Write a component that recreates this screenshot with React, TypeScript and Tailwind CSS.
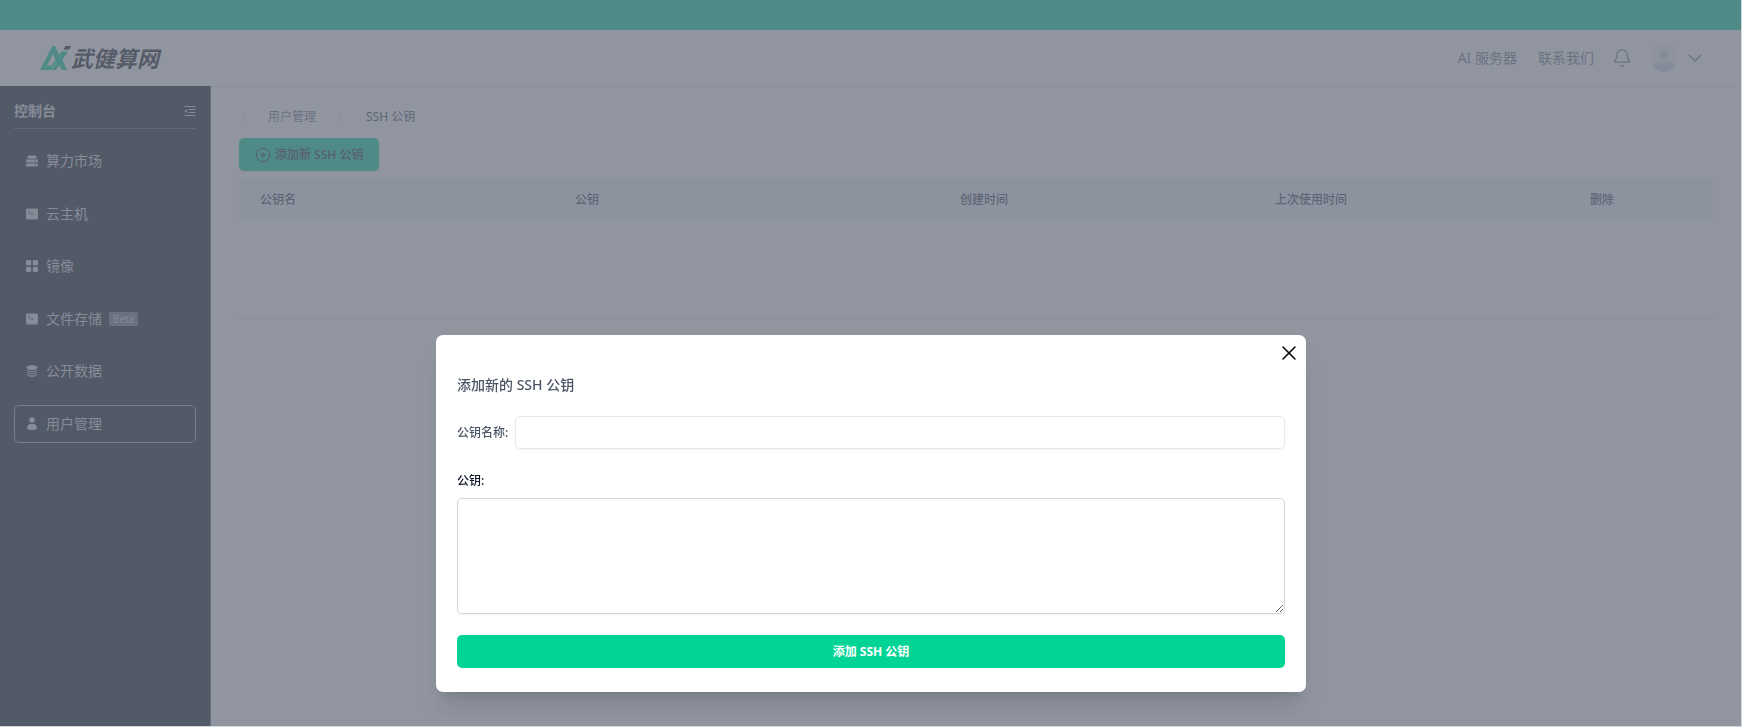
import { useState } from "react";
import type { ReactNode } from "react";
import { clsx } from "clsx";
import { Bell, ChevronDown, ChevronRight, CirclePlus, X } from "lucide-react";

type NavItem = {
  label: string;
  icon: ReactNode;
  badge?: string;
  active?: boolean;
};

const navItems: NavItem[] = [
  { label: "算力市场", icon: <ServerIcon /> },
  { label: "云主机", icon: <TerminalIcon /> },
  { label: "镜像", icon: <GridIcon /> },
  { label: "文件存储", icon: <TerminalIcon />, badge: "Beta" },
  { label: "公开数据", icon: <DatabaseIcon /> },
  { label: "用户管理", icon: <UserIcon />, active: true },
];

const columns = [
  { label: "公钥名", width: "w-[315px]" },
  { label: "公钥", width: "w-[385px]" },
  { label: "创建时间", width: "w-[315px]" },
  { label: "上次使用时间", width: "w-[315px]" },
  { label: "删除", width: "" },
];

export default function App() {
  const [open, setOpen] = useState(true);

  return (
    <div className="flex min-h-screen flex-col border-r border-b border-gray-300 bg-white font-['Noto_Sans','Noto_Sans_CJK_SC',sans-serif] text-xs text-gray-700">
      <div className="h-[30px] bg-[#00d496]" />
      <Header />
      <div className="flex flex-1">
        <Sidebar />
        <main className="min-w-0 flex-1 px-7 pt-5">
          <Breadcrumb />
          <button
            type="button"
            onClick={() => setOpen(true)}
            className="mt-3 flex h-[33px] items-center gap-1 rounded-[5px] bg-[#00d496] px-4 font-medium text-gray-800 shadow-sm"
          >
            <CirclePlus className="h-4 w-4" strokeWidth={1.5} aria-hidden />
            添加新 SSH 公钥
          </button>
          <KeyTable />
        </main>
      </div>
      {open && <AddKeyDialog onClose={() => setOpen(false)} />}
    </div>
  );
}

function Header() {
  return (
    <header className="flex h-14 items-center justify-between pr-[34px] pl-10">
      <a href="#" className="flex items-center">
        <Logo />
        <span className="text-[22px] leading-6 font-bold text-[#15171c] italic">
          武健算网
        </span>
      </a>
      <nav className="flex items-center text-sm text-gray-500">
        <a href="#">AI 服务器</a>
        <a href="#" className="ml-[21px]">
          联系我们
        </a>
        <button type="button" aria-label="通知" className="ml-[18px]">
          <Bell className="h-5 w-5" strokeWidth={1.5} />
        </button>
        <button
          type="button"
          aria-label="用户菜单"
          className="ml-[18px] flex items-center gap-[5px]"
        >
          <AvatarIcon />
          <ChevronDown className="h-6 w-6" strokeWidth={1.2} />
        </button>
      </nav>
    </header>
  );
}

function Sidebar() {
  return (
    <aside className="w-[211px] shrink-0 border-r border-gray-500 bg-[#0b121c] px-3.5 text-sm text-gray-300">
      <div className="flex h-[43px] items-center justify-between border-b border-gray-600 pt-2">
        <h2 className="font-bold">控制台</h2>
        <button type="button" aria-label="收起菜单">
          <CollapseIcon />
        </button>
      </div>
      <ul className="mt-[13px] flex h-[301px] flex-col justify-between">
        {navItems.map((item) => (
          <li key={item.label}>
            <a
              href="#"
              className={clsx(
                "flex h-[38px] items-center rounded-[5px] border pl-[11px]",
                item.active ? "border-gray-400" : "border-transparent"
              )}
            >
              {item.icon}
              <span className="ml-2">{item.label}</span>
              {item.badge && (
                <span className="ml-[7px] rounded-xs bg-gray-500 px-1 text-[10px] leading-[14px] text-gray-300">
                  {item.badge}
                </span>
              )}
            </a>
          </li>
        ))}
      </ul>
    </aside>
  );
}

function Breadcrumb() {
  return (
    <nav
      aria-label="路径"
      className="-mx-7 -mt-5 flex h-10 items-center border-t border-gray-200 px-7 pt-5"
    >
      <ChevronRight
        className="-ml-1 h-4 w-4 text-gray-300"
        strokeWidth={1.5}
        aria-hidden
      />
      <a href="#" className="ml-[17px] text-gray-500">
        用户管理
      </a>
      <ChevronRight
        className="ml-[17px] h-4 w-4 text-gray-300"
        strokeWidth={1.5}
        aria-hidden
      />
      <span className="ml-[17px] text-gray-700">SSH 公钥</span>
    </nav>
  );
}

function KeyTable() {
  return (
    <table className="mt-[7px] w-full table-fixed border-b border-gray-200">
      <thead>
        <tr className="h-[43px] bg-[#eef4f8] text-left">
          {columns.map((column) => (
            <th
              key={column.label}
              scope="col"
              className={clsx("pl-[21px] font-medium", column.width)}
            >
              {column.label}
            </th>
          ))}
        </tr>
      </thead>
      <tbody>
        <tr className="h-[97px]">
          <td colSpan={columns.length} />
        </tr>
      </tbody>
    </table>
  );
}

function AddKeyDialog({ onClose }: { onClose: () => void }) {
  return (
    <div className="fixed inset-0 mr-px mb-px flex items-end justify-center bg-[#6b7280]/75 pb-[34px] pl-px">
      <form
        role="dialog"
        aria-modal="true"
        aria-labelledby="add-key-title"
        onSubmit={(e) => e.preventDefault()}
        className="flex w-1/2 flex-col rounded-[7px] bg-white px-[21px] pt-1.5 pb-6 shadow-xl"
      >
        <button
          type="button"
          aria-label="关闭"
          onClick={onClose}
          className="-mr-4 self-end text-black"
        >
          <X className="h-6 w-6" strokeWidth={1.5} />
        </button>
        <h3
          id="add-key-title"
          className="mt-2.5 text-sm leading-5 font-medium text-gray-600"
        >
          添加新的 SSH 公钥
        </h3>
        <div className="mt-[21px] flex items-center gap-[7px]">
          <label htmlFor="key-name" className="font-medium text-gray-600">
            公钥名称:
          </label>
          <input
            id="key-name"
            type="text"
            className="h-[33px] min-w-0 flex-1 rounded-[5px] border border-gray-200 px-3 shadow-xs outline-none"
          />
        </div>
        <label
          htmlFor="key-value"
          className="mt-6 leading-4 font-medium text-gray-900"
        >
          公钥:
        </label>
        <textarea
          id="key-value"
          className="mt-[9px] h-[116px] w-full rounded-[5px] border border-gray-300 px-3 py-2 shadow-xs outline-none"
        />
        <button
          type="submit"
          className="mt-[21px] h-[33px] rounded-[5px] bg-[#02d496] font-bold text-white"
        >
          添加 SSH 公钥
        </button>
      </form>
    </div>
  );
}

function Logo() {
  return (
    <svg width="31" height="24" viewBox="0 0 31 24" aria-hidden>
      <path
        fill="#00d496"
        d="M0 24 12.500 0h2.500l4 8.500L22 5.500h6L22.500 14 27 24h-5.500l-2-5-3.500 5H0Zm7-4.500h4.500L15.500 14l-2.500-6Z"
      />
      <path
        d="m11.500 24 5-8"
        stroke="#fff"
        strokeWidth="0.800"
        fill="none"
      />
      <path fill="#15171c" d="M25.500 0H31l-2 3.800h-5.500Z" />
    </svg>
  );
}

function AvatarIcon() {
  return (
    <svg width="28" height="28" viewBox="0 0 28 28" aria-hidden>
      <clipPath id="avatar-clip">
        <circle cx="14" cy="14" r="14" />
      </clipPath>
      <g clipPath="url(#avatar-clip)">
        <rect width="28" height="28" fill="#f6f7fb" />
        <circle cx="14" cy="10.500" r="4.800" fill="#d3d6e4" />
        <ellipse cx="14" cy="26" rx="12.500" ry="8.500" fill="#d3d6e4" />
      </g>
    </svg>
  );
}

function CollapseIcon() {
  return (
    <svg width="12" height="12" viewBox="0 0 12 12" fill="none" aria-hidden>
      <path
        d="M.5 1.500h11M4.500 4.500h7M4.500 7.500h7M.5 10.500h11"
        stroke="currentColor"
      />
      <path d="M2.800 4v4L.5 6Z" fill="currentColor" />
    </svg>
  );
}

function ServerIcon() {
  return (
    <svg width="12" height="12" viewBox="0 0 12 12" fill="currentColor" aria-hidden>
      <path d="M2.800.6h6.400q.6 0 .9.600l.9 2.200H1l.9-2.200q.3-.6.900-.6Z" />
      <rect y="4.500" width="12" height="3" rx="1" />
      <rect y="8.500" width="12" height="3" rx="1" />
      <path
        d="M8 6h.8M9.600 6h.8M8 10h.8M9.600 10h.8"
        stroke="#0b121c"
        strokeWidth="0.800"
      />
    </svg>
  );
}

function TerminalIcon() {
  return (
    <svg width="12" height="12" viewBox="0 0 12 12" aria-hidden>
      <rect y=".5" width="12" height="11" rx="1.500" fill="currentColor" />
      <path
        d="m2.500 3 1.600 1.500L2.500 6M5 6h2.200"
        fill="none"
        stroke="#0b121c"
      />
    </svg>
  );
}

function GridIcon() {
  return (
    <svg width="12" height="12" viewBox="0 0 12 12" fill="currentColor" aria-hidden>
      <rect width="5.300" height="5.300" rx="1.500" />
      <rect x="6.700" width="5.300" height="5.300" rx="1.500" />
      <rect y="6.700" width="5.300" height="5.300" rx="1.500" />
      <rect x="6.700" y="6.700" width="5.300" height="5.300" rx="1.500" />
    </svg>
  );
}

function DatabaseIcon() {
  return (
    <svg width="12" height="12" viewBox="0 0 12 12" aria-hidden>
      <ellipse cx="6" cy="2.500" rx="5.300" ry="2.500" fill="currentColor" />
      <path
        d="M.8 4.200q1.600 1.700 5.200 1.700t5.200-1.700v1.300Q9.600 7.200 6 7.200T.8 5.500Zm0 2.300q1.600 1.700 5.200 1.700t5.200-1.700v1.300Q9.600 9.500 6 9.500T.8 7.800Zm0 2.300q1.600 1.700 5.200 1.700t5.200-1.700v1.200Q9.600 12 6 12T.8 10Z"
        fill="currentColor"
        opacity="0.850"
      />
    </svg>
  );
}

function UserIcon() {
  return (
    <svg width="12" height="13" viewBox="0 0 12 13" fill="currentColor" aria-hidden>
      <circle cx="6" cy="3" r="2.800" />
      <path d="M1 11.200C1 8.300 3 6.800 6 6.800s5 1.500 5 4.400q0 1.800-5 1.800t-5-1.800Z" />
    </svg>
  );
}
